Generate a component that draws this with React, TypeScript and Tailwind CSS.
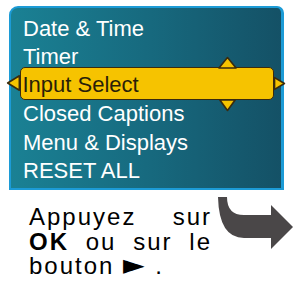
import React from 'react';

const items = ['Date & Time', 'Timer', 'Input Select', 'Closed Captions', 'Menu & Displays', 'RESET ALL'];

function Tri({ points, className }: { points: string; className: string }) {
  return (
    <svg className={`absolute ${className}`} viewBox="0 0 20 20" preserveAspectRatio="none">
      <polygon points={points} fill="#f6c300" stroke="#3a2b0e" strokeWidth="1.6" strokeLinejoin="round" vectorEffect="non-scaling-stroke" />
    </svg>
  );
}

export default function App() {
  return (
    <div className="w-[293px] h-[287px] bg-white overflow-hidden font-['Liberation_Sans',Arial,sans-serif]">
      {/* Menu panel */}
      <div className="ml-[9px] mt-[6px] w-[275px] h-[184px] box-border border-2 border-r-[3px] border-[#1c9bd6] rounded-tl-[9px] rounded-tr-[7px] bg-gradient-to-r from-[#1a8194] via-[#176a7f] to-[#145166]">
        <div className="pt-[6.5px] text-[22px] leading-[28.5px] text-white">
          {items.map((item) =>
            item === 'Input Select' ? (
              <div
                key={item}
                className="relative ml-[9px] -mt-[4.5px] w-[254px] h-[33px] box-border border-[1.5px] border-[#3a2b0e] rounded-[5px] bg-[#f6c300] pl-[1.5px] pt-[3px] text-[#2a1f08]"
              >
                {item}
                <Tri points="10,20 1,20 10,1 19,20" className="left-[197px] -top-[11px] w-[19px] h-[11px] overflow-visible" />
                <Tri points="1,0 19,0 10,19" className="left-[198px] top-[31.5px] w-[17px] h-[11px] overflow-visible" />
                <Tri points="19,1 19,19 1,10" className="-left-[14px] top-[7px] w-[13px] h-[16px] overflow-visible" />
                <Tri points="1,1 1,19 19,10" className="left-[252.5px] top-[9px] w-[11px] h-[13px] overflow-visible" />
              </div>
            ) : (
              <div key={item} className="pl-[12px] whitespace-nowrap">
                {item}
              </div>
            )
          )}
        </div>
      </div>

      {/* Instruction */}
      <div className="flex items-start">
        <div className="ml-[29px] mt-[15px] w-[183px] text-[24px] leading-[24.5px] tracking-[2px] text-black">
          <div className="text-justify [text-align-last:justify]">Appuyez sur</div>
          <div className="text-justify [text-align-last:justify]">
            <b>OK</b> ou sur le
          </div>
          <div>
            bouton <span className="font-['DejaVu_Sans',sans-serif] text-[28px] leading-[0px]">►</span> .
          </div>
        </div>
        <svg className="mt-[2px] w-[81px] h-[60px] shrink-0" viewBox="0 0 81 60">
          <path
            d="M6 5 L15 5 Q15 23 32 23 L59 23 L59 13 L81 35 L59 57 L59 46 L32 46 Q7 46 6 5 Z"
            fill="#4a4748"
          />
        </svg>
      </div>
    </div>
  );
}
